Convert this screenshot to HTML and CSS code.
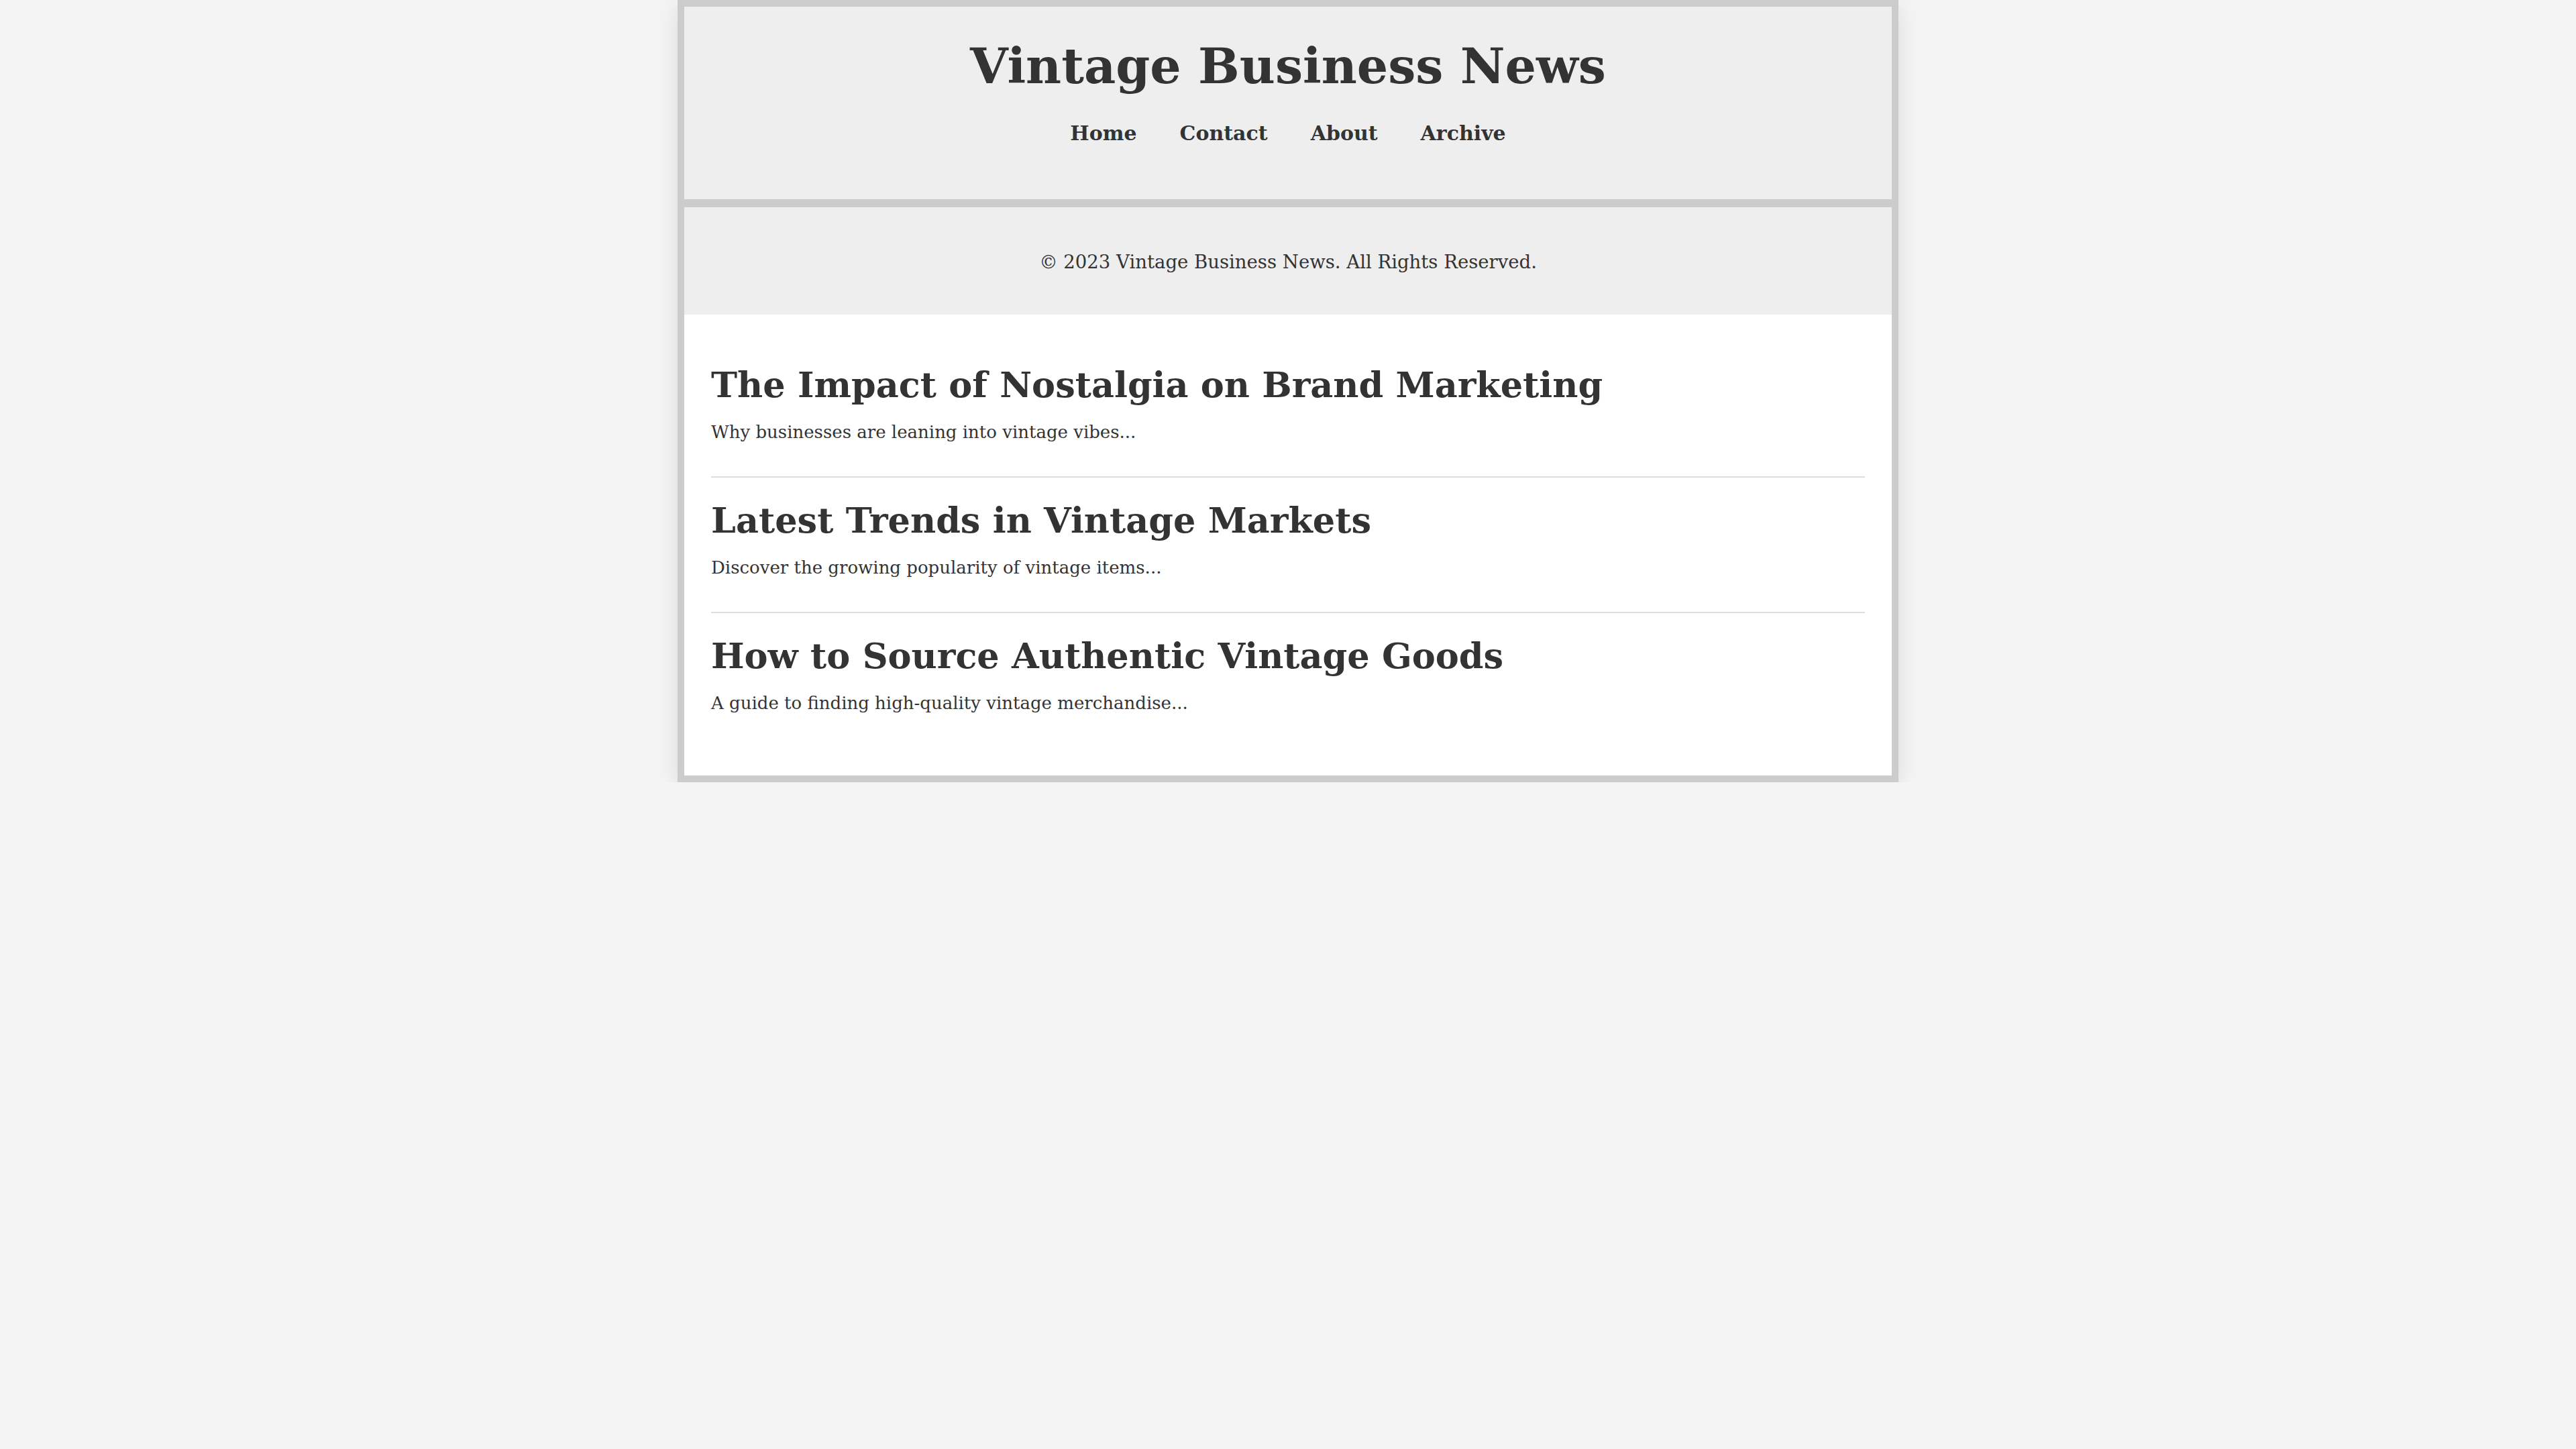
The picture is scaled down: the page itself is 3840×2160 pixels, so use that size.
FILE: index.html
```html
<!DOCTYPE html>
<html lang="en">
<head>
<meta charset="utf-8">
<title>Vintage Business News</title>
<link rel="stylesheet" href="styles.css">
</head>
<body>
<div class="page">
  <header class="masthead">
    <h1 class="site-title">Vintage Business News</h1>
    <nav class="site-nav">
      <a href="#">Home</a>
      <a href="#">Contact</a>
      <a href="#">About</a>
      <a href="#">Archive</a>
    </nav>
  </header>
  <footer class="site-footer">
    <p>&copy; 2023 Vintage Business News. All Rights Reserved.</p>
  </footer>
  <main class="articles">
    <article class="article">
      <h2>The Impact of Nostalgia on Brand Marketing</h2>
      <p>Why businesses are leaning into vintage vibes...</p>
    </article>
    <article class="article">
      <h2>Latest Trends in Vintage Markets</h2>
      <p>Discover the growing popularity of vintage items...</p>
    </article>
    <article class="article">
      <h2>How to Source Authentic Vintage Goods</h2>
      <p>A guide to finding high-quality vintage merchandise...</p>
    </article>
  </main>
</div>
</body>
</html>
```

FILE: styles.css
```css
* {
  box-sizing: border-box;
}

body {
  margin: 0;
  background: #f4f4f4;
  color: #333;
  font-family: "DejaVu Serif", Georgia, serif;
}

.page {
  width: 1820px;
  margin: 0 auto;
  border: 10px solid #ccc;
  background: #fff;
  box-shadow: 0 10px 30px rgba(0, 0, 0, 0.1);
}

.masthead {
  background: #eee;
  border-bottom: 12px solid #ccc;
  text-align: center;
  padding: 43px 40px 78px;
}

.site-title {
  margin: 0;
  font-size: 73px;
  line-height: 90px;
  font-weight: bold;
  color: #333;
}

.site-nav {
  margin-top: 36px;
  display: flex;
  justify-content: center;
  gap: 64px;
  line-height: 40px;
}

.site-nav a {
  color: #333;
  text-decoration: none;
  font-weight: bold;
  font-size: 30px;
}

.site-footer {
  background: #eee;
  text-align: center;
  padding: 61px 40px 59px;
}

.site-footer p {
  margin: 0;
  font-size: 27.5px;
  line-height: 40px;
}

.articles {
  background: #fff;
  padding: 41px 40px 42px;
}

.article {
  padding: 29px 0 42px;
  border-bottom: 2px solid #ddd;
}

.article:last-child {
  border-bottom: none;
}

.article h2 {
  margin: 0;
  font-size: 52.5px;
  line-height: 70px;
  font-weight: bold;
  color: #333;
}

.article p {
  margin: 11px 0 0;
  font-size: 26px;
  line-height: 48px;
}
```
